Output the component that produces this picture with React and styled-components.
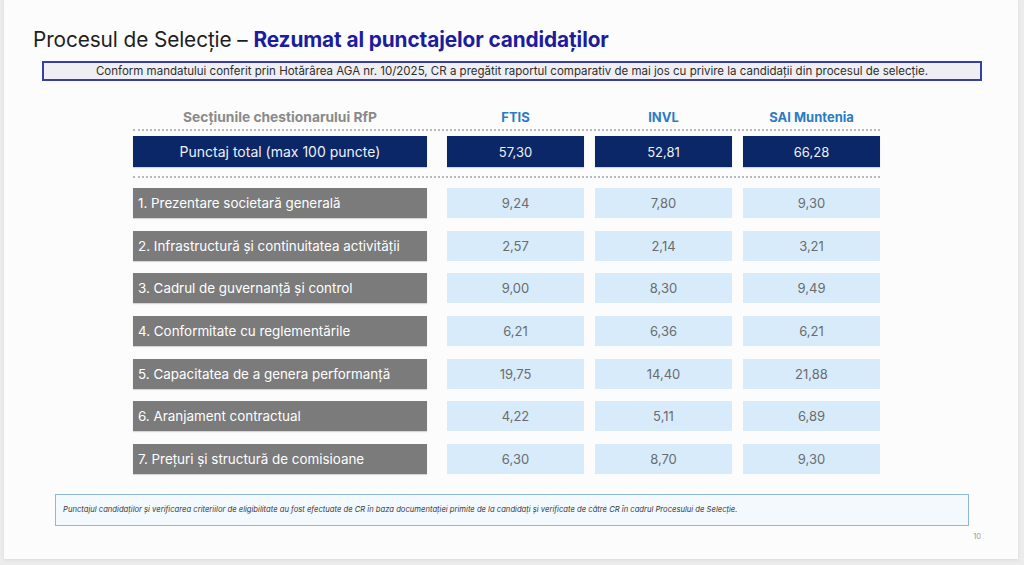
import React from "react";
import styled, { createGlobalStyle } from "styled-components";

const Global = createGlobalStyle`
  html, body { margin: 0; padding: 0; background: #ececec; }
  body { font-family: Inter, "Open Sans", "Liberation Sans", sans-serif; }
  #root { width: 1024px; height: 565px; overflow: hidden; }
`;

const Slide = styled.div`
  width: 1014px;
  height: 559px;
  margin-left: 4px;
  background: #fcfcfc;
  box-shadow: 0 1px 3px rgba(0,0,0,0.08);
  display: flex;
  flex-direction: column;
  padding-top: 27px;
  box-sizing: border-box;
`;

const Title = styled.h1`
  margin: 0 0 0 29px;
  font-size: 20.8px;
  line-height: 26px;
  font-weight: 400;
  color: #1e1e1e;
  letter-spacing: -0.1px;
`;

const TitleAccent = styled.span`
  font-weight: 700;
  color: #1c1ca0;
`;

const Banner = styled.div`
  margin: 8px 0 0 38px;
  width: 940px;
  height: 20px;
  box-sizing: border-box;
  border: 2px solid #3c3ca6;
  background: #efeff3;
  display: flex;
  align-items: center;
  justify-content: center;
  font-size: 11.5px;
  color: #2e2e2e;
  white-space: nowrap;
`;

const Table = styled.div`
  margin: 25px 0 0 129px;
  width: 747px;
  display: flex;
  flex-direction: column;
`;

const Row = styled.div`
  display: grid;
  grid-template-columns: 303px 137px 137px 137px;
  column-gap: 11px;
  height: ${p => p.$h}px;
  margin-top: ${p => p.$mt || 0}px;
`;

const HeadCell = styled.div`
  display: flex;
  align-items: center;
  justify-content: center;
  font-size: ${p => (p.$muted ? "13.8px" : "13px")};
  font-weight: 700;
  color: ${p => (p.$muted ? "#8a8a8a" : "#2b7cc2")};
  margin-right: ${p => (p.$muted ? "9px" : "0")};
`;

const Dots = styled.div`
  margin-top: ${p => p.$mt}px;
  height: 0;
  border-top: 2px dotted #b8b8b8;
`;

const Cell = styled.div`
  display: flex;
  align-items: center;
  justify-content: ${p => (p.$label && p.$tone === "grey" ? "flex-start" : "center")};
  padding-left: ${p => (p.$label && p.$tone === "grey" ? "5px" : "0")};
  margin-right: ${p => (p.$label ? "9px" : "0")};
  font-size: ${p => (p.$label ? (p.$tone === "navy" ? "14px" : "13.4px") : "13px")};
  background: ${p =>
    p.$tone === "navy" ? "#0b2767" : p.$tone === "grey" ? "#7b7b7b" : "#d8ebfa"};
  color: ${p =>
    p.$tone === "navy" ? "#eef0f6" : p.$tone === "grey" ? "#ffffff" : "#6a6c70"};
  box-shadow: ${p => (p.$tone === "light" ? "none" : "0 1px 1px rgba(0,0,0,0.15)")};
`;

const Rows = styled.div`
  display: flex;
  flex-direction: column;
  gap: 12.67px;
  margin-top: 10px;
`;

const Note = styled.div`
  margin: 20px 0 0 51px;
  width: 914px;
  height: 32px;
  box-sizing: border-box;
  border: 1.5px solid #8fb8d8;
  background: #f3f9fd;
  display: flex;
  align-items: center;
  padding-left: 7px;
  font-size: 7.65px;
  font-style: italic;
  color: #3a3a3a;
`;

const PageNum = styled.div`
  align-self: flex-end;
  margin: 6px 37px 0 0;
  font-size: 7.5px;
  color: #9a9a9a;
`;

const sections = [
  ["1. Prezentare societară generală", "9,24", "7,80", "9,30"],
  ["2. Infrastructură și continuitatea activității", "2,57", "2,14", "3,21"],
  ["3. Cadrul de guvernanță și control", "9,00", "8,30", "9,49"],
  ["4. Conformitate cu reglementările", "6,21", "6,36", "6,21"],
  ["5. Capacitatea de a genera performanță", "19,75", "14,40", "21,88"],
  ["6. Aranjament contractual", "4,22", "5,11", "6,89"],
  ["7. Prețuri și structură de comisioane", "6,30", "8,70", "9,30"],
];

export default function App() {
  return (
    <>
      <Global />
      <Slide>
        <Title>
          Procesul de Selecție – <TitleAccent>Rezumat al punctajelor candidaților</TitleAccent>
        </Title>
        <Banner>
          Conform mandatului conferit prin Hotărârea AGA nr. 10/2025, CR a pregătit raportul comparativ de mai jos cu privire la candidații din procesul de selecție.
        </Banner>
        <Table>
          <Row $h={22}>
            <HeadCell $muted>Secțiunile chestionarului RfP</HeadCell>
            <HeadCell>FTIS</HeadCell>
            <HeadCell>INVL</HeadCell>
            <HeadCell>SAI Muntenia</HeadCell>
          </Row>
          <Dots $mt={1} />
          <Row $h={31} $mt={5}>
            <Cell $tone="navy" $label>Punctaj total (max 100 puncte)</Cell>
            <Cell $tone="navy">57,30</Cell>
            <Cell $tone="navy">52,81</Cell>
            <Cell $tone="navy">66,28</Cell>
          </Row>
          <Dots $mt={9} />
          <Rows>
            {sections.map(([label, a, b, c]) => (
              <Row key={label} $h={30}>
                <Cell $tone="grey" $label>{label}</Cell>
                <Cell $tone="light">{a}</Cell>
                <Cell $tone="light">{b}</Cell>
                <Cell $tone="light">{c}</Cell>
              </Row>
            ))}
          </Rows>
        </Table>
        <Note>
          Punctajul candidaților și verificarea criteriilor de eligibilitate au fost efectuate de CR în baza documentației primite de la candidați și verificate de către CR în cadrul Procesului de Selecție.
        </Note>
        <PageNum>10</PageNum>
      </Slide>
    </>
  );
}
